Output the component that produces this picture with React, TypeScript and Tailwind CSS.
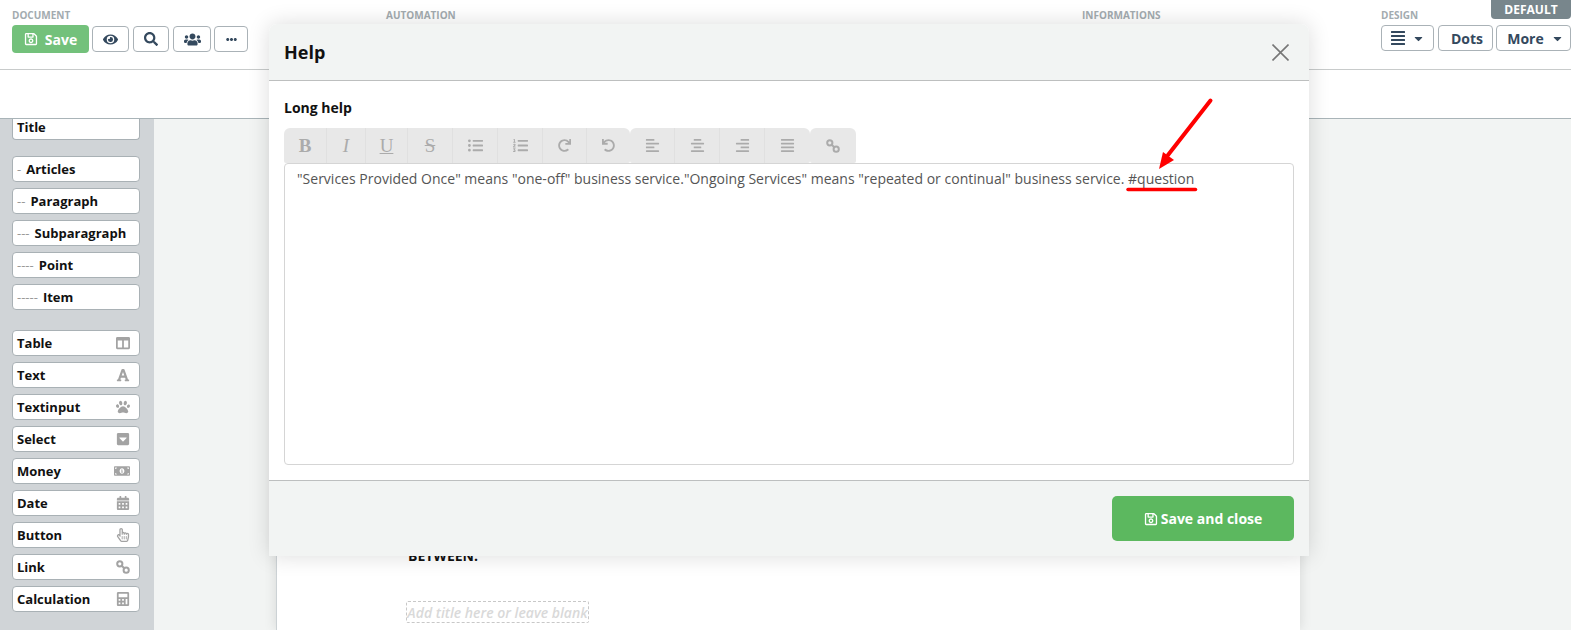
import type { ReactNode } from 'react';
import {
  FaCalculator,
  FaCalendarAlt,
  FaCaretDown,
  FaCaretSquareDown,
  FaColumns,
  FaEllipsisH,
  FaEye,
  FaFont,
  FaListOl,
  FaListUl,
  FaAlignCenter,
  FaAlignJustify,
  FaAlignLeft,
  FaAlignRight,
  FaMoneyBillAlt,
  FaPaw,
  FaRedo,
  FaRegHandPointer,
  FaRegSave,
  FaSearch,
  FaUndo,
  FaUsers,
} from 'react-icons/fa';

function ChainIcon() {
  return (
    <svg width="14" height="14" viewBox="0 0 14 14" fill="none" stroke="currentColor" strokeWidth="2">
      <circle cx="3.8" cy="3.8" r="2.6" />
      <circle cx="10.2" cy="10.2" r="2.6" />
      <path d="M5.5 5.5 L8.5 8.5" />
    </svg>
  );
}

function TopButton({ className, children }: { className: string; children: ReactNode }) {
  return (
    <button
      type="button"
      className={`flex h-[26px] items-center justify-center rounded-[4px] border border-[#aab2b7] bg-white text-[#34495e] ${className}`}
    >
      {children}
    </button>
  );
}

function SectionLabel({ className, children }: { className: string; children: ReactNode }) {
  return <div className={`absolute top-[8px] text-[10px] font-bold leading-[14px] text-[#a3abaf] ${className}`}>{children}</div>;
}

function SideButton({ dash, label, icon, className = 'h-[26px]' }: { dash?: string; label: string; icon?: ReactNode; className?: string }) {
  return (
    <div className={`flex w-[128px] items-center justify-between rounded-[4px] border border-[#a9b1b5] bg-white pl-[4px] pr-[9px] ${className}`}>
      <span className="text-[13px] font-bold leading-none text-[#111]">
        {dash && <span className="mr-[5px] font-normal text-[#999]">{dash}</span>}
        {label}
      </span>
      {icon && <span className="text-[14px] text-[#a3a3a3]">{icon}</span>}
    </div>
  );
}

const serif = "font-['Liberation_Serif',serif] text-[19px] leading-none";

const groups = [
  [
    { w: 'w-[43px]', icon: <span className={`${serif} font-bold`}>B</span> },
    { w: 'w-[39px]', icon: <span className={`${serif} italic`}>I</span> },
    { w: 'w-[42px]', icon: <span className={`${serif} underline`}>U</span> },
    { w: 'w-[45px]', icon: <span className={`${serif} line-through`}>S</span> },
    { w: 'w-[45px]', icon: <FaListUl /> },
    { w: 'w-[45px]', icon: <FaListOl /> },
    { w: 'w-[44px]', icon: <FaRedo className="text-[13px]" /> },
    { w: 'w-[43px]', icon: <FaUndo className="text-[13px]" /> },
  ],
  [
    { w: 'w-[45px]', icon: <FaAlignLeft /> },
    { w: 'w-[45px]', icon: <FaAlignCenter /> },
    { w: 'w-[45px]', icon: <FaAlignRight /> },
    { w: 'w-[45px]', icon: <FaAlignJustify /> },
  ],
  [{ w: 'w-[46px]', icon: <ChainIcon /> }],
];

export default function App() {
  return (
    <div className="relative flex h-[630px] w-[1571px] flex-col overflow-hidden bg-[#f2f4f3] font-['Open_Sans',sans-serif]">
      <header className="relative flex h-[70px] shrink-0 items-start justify-between border-b border-[#c8cbcb] bg-white pl-[12px] pt-[25px]">
        <SectionLabel className="left-[12px]">DOCUMENT</SectionLabel>
        <SectionLabel className="left-[386px]">AUTOMATION</SectionLabel>
        <SectionLabel className="left-[1082px]">INFORMATIONS</SectionLabel>
        <SectionLabel className="left-[1381px]">DESIGN</SectionLabel>
        <div className="flex items-center">
          <button type="button" className="flex h-[28px] w-[77px] items-center justify-center gap-[7px] rounded-[4px] bg-[#73c17b] text-[14px] font-bold text-white">
            <FaRegSave className="text-[14px]" />
            Save
          </button>
          <TopButton className="ml-[3px] w-[37px] text-[15px]"><FaEye /></TopButton>
          <TopButton className="ml-[4px] w-[36px] text-[14px]"><FaSearch /></TopButton>
          <TopButton className="ml-[4px] w-[38px] text-[17px]"><FaUsers /></TopButton>
          <TopButton className="ml-[3px] w-[34px] text-[11px]"><FaEllipsisH /></TopButton>
        </div>
        <div className="flex gap-[3px] text-[14px] font-bold">
          <TopButton className="w-[53px] gap-[6px]"><FaAlignJustify className="text-[16px]" /><FaCaretDown className="text-[13px]" /></TopButton>
          <TopButton className="ml-[1px] w-[55px] pl-[3px]">Dots</TopButton>
          <TopButton className="w-[75px] gap-[7px] pl-[4px]">More<FaCaretDown className="text-[13px]" /></TopButton>
        </div>
        <div className="absolute right-0 top-0 flex h-[19px] w-[80px] items-center justify-center rounded-b-[4px] bg-[#78868c] text-[12px] font-bold text-white">
          DEFAULT
        </div>
      </header>

      <div className="h-[49px] shrink-0 border-b border-[#a9b4b8] bg-white" />

      <div className="flex min-h-0 flex-1">
        <aside className="flex w-[154px] shrink-0 flex-col bg-[#d0d4d7] pl-[12px]">
          <SideButton label="Title" className="h-[21px] rounded-t-none border-t-0 pb-[3px]" />
          <div className="mt-[16px] flex flex-col gap-[6px]">
            <SideButton dash="-" label="Articles" />
            <SideButton dash="--" label="Paragraph" />
            <SideButton dash="---" label="Subparagraph" />
            <SideButton dash="----" label="Point" />
            <SideButton dash="-----" label="Item" />
          </div>
          <div className="mt-[20px] flex flex-col gap-[6px]">
            <SideButton label="Table" icon={<FaColumns />} />
            <SideButton label="Text" icon={<FaFont />} />
            <SideButton label="Textinput" icon={<FaPaw />} />
            <SideButton label="Select" icon={<FaCaretSquareDown />} />
            <SideButton label="Money" icon={<FaMoneyBillAlt className="text-[16px]" />} />
            <SideButton label="Date" icon={<FaCalendarAlt />} />
            <SideButton label="Button" icon={<FaRegHandPointer />} />
            <SideButton label="Link" icon={<ChainIcon />} />
            <SideButton label="Calculation" icon={<FaCalculator />} />
          </div>
        </aside>
        <main className="ml-[122px] w-[1024px] border-l border-[#ccd2d5] bg-white pl-[131px] pt-[428px] shadow-[0_0_12px_rgba(0,0,0,0.12)]">
          <div className="text-[14px] font-bold leading-[18px] text-[#111]">BETWEEN:</div>
          <div className="ml-[-2px] mt-[36px] flex h-[22px] w-[183px] items-center justify-center rounded-[2px] border border-dashed border-[#c8c8c8] text-[14px] font-semibold italic text-[#d9d9d9]">
            Add title here or leave blank
          </div>
        </main>
      </div>

      <div className="absolute left-[269px] top-[24px] flex h-[532px] w-[1040px] flex-col rounded-t-[8px] bg-white shadow-[0_0_22px_rgba(0,0,0,0.14)]">
        <div className="flex h-[57px] shrink-0 items-center justify-between rounded-t-[8px] border-b border-[#bdbfbf] bg-[#f2f4f3] pl-[15px] pr-[20px]">
          <div className="text-[18px] font-bold text-[#111]">Help</div>
          <svg width="17" height="17" viewBox="0 0 17 17" fill="none" stroke="#777777" strokeWidth="1.6">
            <path d="M0.5 0.5 L16.5 16.5 M16.5 0.5 L0.5 16.5" />
          </svg>
        </div>
        <div className="flex min-h-0 flex-1 flex-col px-[15px] pt-[17px]">
          <div className="h-[30px] text-[14px] font-bold leading-[20px] text-[#111]">Long help</div>
          <div className="flex h-[35px] shrink-0">
            {groups.map((group, i) => (
              <div key={i} className="flex rounded-t-[6px] rounded-b-[2px] bg-[#e8e8e8]">
                {group.map((item, j) => (
                  <div key={j} className={`flex items-center justify-center border-r border-[#e0e0e0] text-[15px] text-[#ababab] last:border-r-0 ${item.w}`}>
                    {item.icon}
                  </div>
                ))}
              </div>
            ))}
          </div>
          <div className="h-[302px] w-[1010px] rounded-[4px] border border-[#d5d5d5] px-[12px] py-[5px] text-[14px] leading-[20px] tracking-[0.006px] text-[#555]">
            "Services Provided Once" means "one-off" business service."Ongoing Services" means "repeated or continual" business service. #question
          </div>
        </div>
        <div className="flex h-[76px] shrink-0 items-start justify-end border-t border-[#bdbfbf] bg-[#f2f4f3] pr-[15px] pt-[15px]">
          <button type="button" className="flex h-[45px] w-[182px] items-center justify-center gap-[3px] rounded-[5px] bg-[#5cb85f] text-[14px] font-bold text-white">
            <FaRegSave className="text-[14px]" />
            Save and close
          </button>
        </div>
      </div>

      <svg className="absolute left-[1120px] top-[95px]" width="100" height="100" viewBox="0 0 100 100" fill="none">
        <path d="M90.5 5.5 L48 60" stroke="#ff0000" strokeWidth="4" strokeLinecap="round" />
        <path d="M39 74 L43 57 L54 65 Z" fill="#ff0000" />
        <path d="M8 94.5 H75.5" stroke="#ff0000" strokeWidth="3.5" strokeLinecap="round" />
      </svg>
    </div>
  );
}
